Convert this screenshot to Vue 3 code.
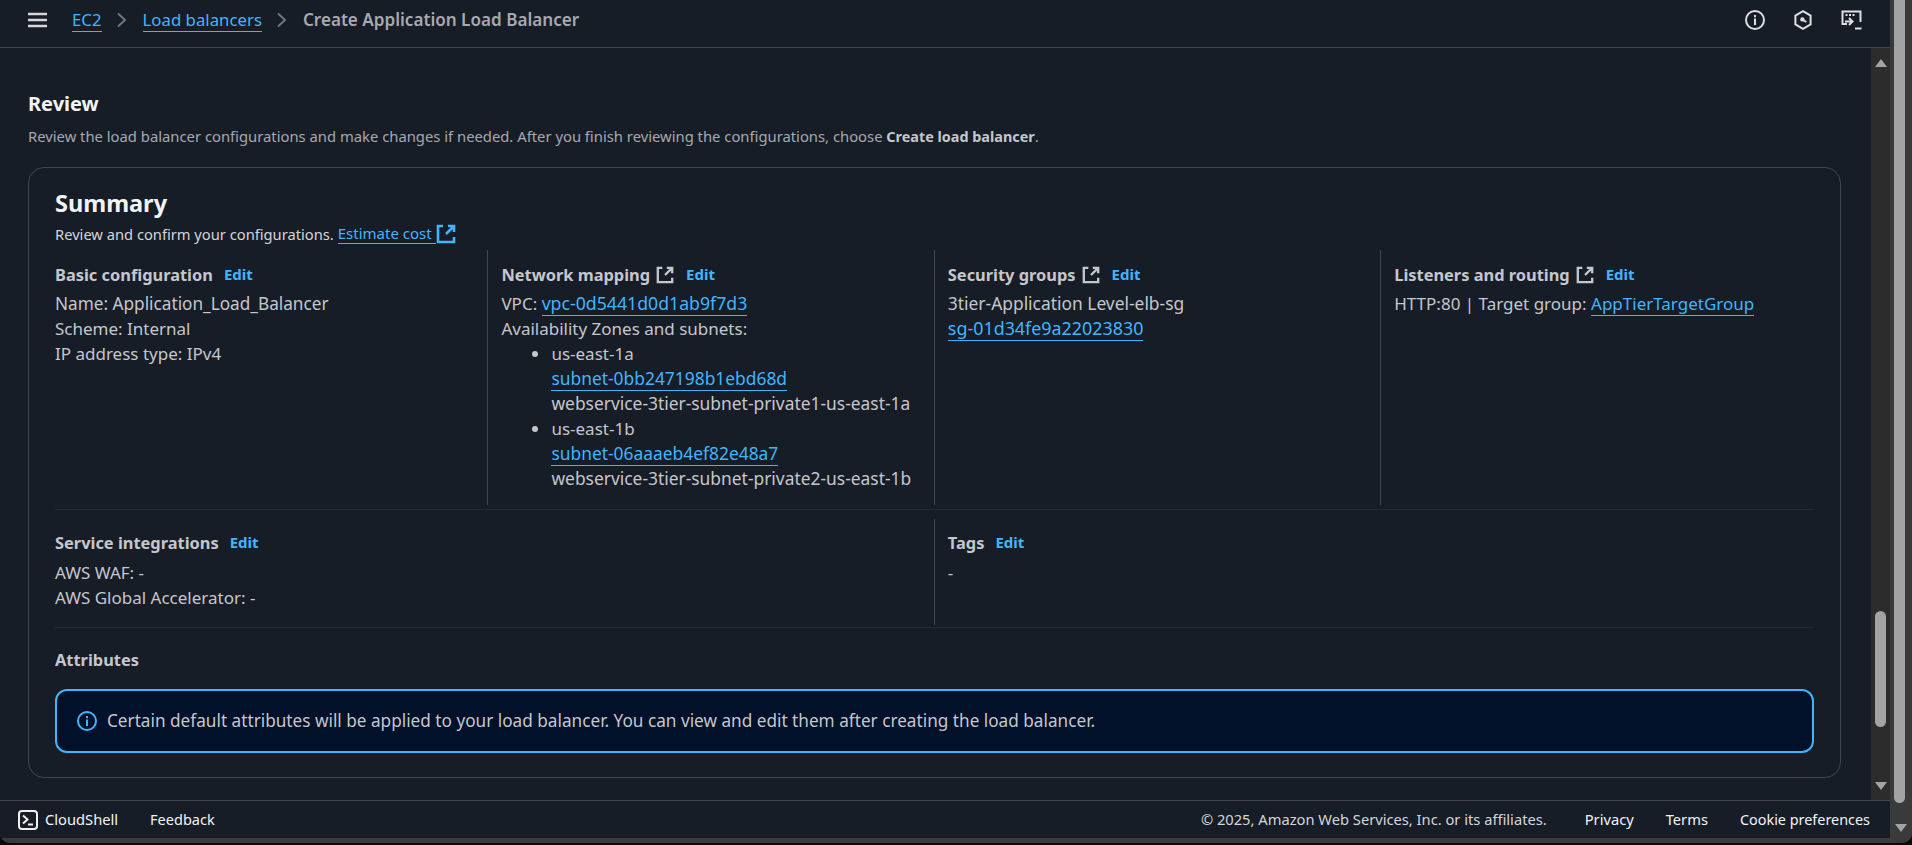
<script setup>
const subnets = [
  { az: 'us-east-1a', id: 'subnet-0bb247198b1ebd68d', name: 'webservice-3tier-subnet-private1-us-east-1a' },
  { az: 'us-east-1b', id: 'subnet-06aaaeb4ef82e48a7', name: 'webservice-3tier-subnet-private2-us-east-1b' }
]
</script>

<template>
  <div class="window">
    <div class="left">
      <header class="topbar">
        <svg class="menu" width="19" height="16" viewBox="0 0 19 16"><path d="M0 2h19M0 8h19M0 14h19" stroke="#d5d5da" stroke-width="2.4" fill="none"/></svg>
        <a class="link crumb">EC2</a>
        <svg class="chev" width="12" height="16" viewBox="0 0 12 16"><path d="M2 1.5 9 8l-7 6.5" stroke="#73757c" stroke-width="2" fill="none"/></svg>
        <a class="link crumb">Load balancers</a>
        <svg class="chev" width="12" height="16" viewBox="0 0 12 16"><path d="M2 1.5 9 8l-7 6.5" stroke="#73757c" stroke-width="2" fill="none"/></svg>
        <span class="crumb current">Create Application Load Balancer</span>
        <div class="top-icons">
          <svg width="20" height="20" viewBox="0 0 20 20" fill="none" stroke="#dedee3" stroke-width="2"><circle cx="10" cy="10" r="9"/><path d="M10 8.5V15M10 5v2.2"/></svg>
          <svg width="20" height="20" viewBox="0 0 20 20" fill="none" stroke="#dedee3" stroke-width="2"><path d="M10 1.2 17.6 5.6v8.8L10 18.800 2.400 14.400V5.600z"/><circle cx="9.400" cy="9.400" r="2.200" fill="#dedee3" stroke="none"/><path d="M10 10l3.400 2"/></svg>
          <svg width="21" height="20" viewBox="0 0 21 20" fill="none" stroke="#dedee3" stroke-width="2"><path d="M6 14H1.500V1.500h18V12"/><path d="M4.500 5h2M8 5h2M11.500 5h2" stroke-width="2"/><path d="M4 11.500h7.500M8 8l3.500 3.500L8 15M14 18.500h6.500"/></svg>
        </div>
      </header>

      <div class="middle">
        <main class="content">
          <h2 class="title">Review</h2>
          <p class="desc">Review the load balancer configurations and make changes if needed. After you finish reviewing the configurations, choose <b>Create load balancer</b>.</p>

          <section class="card">
            <h3 class="summary">Summary</h3>
            <p class="sub"><span>Review and confirm your configurations.</span> <a class="link est">Estimate cost</a>
              <svg class="ext" width="20" height="20" viewBox="0 0 20 20" fill="none" stroke="#42b4ff" stroke-width="2.600"><path d="M7 2H2v16h16v-5"/><path d="M12 2h6v6M18 2l-8 8" /></svg>
            </p>

            <div class="row four">
              <div class="col">
                <div class="head"><b>Basic configuration</b><a class="edit">Edit</a></div>
                <div class="name">Name: Application_Load_Balancer</div>
                <div>Scheme: Internal</div>
                <div>IP address type: IPv4</div>
              </div>
              <div class="col">
                <div class="head"><b>Network mapping</b>
                  <svg class="ext-head" width="18" height="18" viewBox="0 0 20 20" fill="none" stroke="#c6c6cd" stroke-width="2.600"><path d="M7 2H2v16h16v-5"/><path d="M12 2h6v6M18 2l-8 8"/></svg>
                  <a class="edit">Edit</a></div>
                <div>VPC: <a class="link vpc">vpc-0d5441d0d1ab9f7d3</a></div>
                <div>Availability Zones and subnets:</div>
                <ul class="zones">
                  <li v-for="s in subnets" :key="s.id">
                    <div>{{ s.az }}</div>
                    <div><a class="link num">{{ s.id }}</a></div>
                    <div class="num">{{ s.name }}</div>
                  </li>
                </ul>
              </div>
              <div class="col">
                <div class="head"><b>Security groups</b>
                  <svg class="ext-head" width="18" height="18" viewBox="0 0 20 20" fill="none" stroke="#c6c6cd" stroke-width="2.600"><path d="M7 2H2v16h16v-5"/><path d="M12 2h6v6M18 2l-8 8"/></svg>
                  <a class="edit">Edit</a></div>
                <div class="num">3tier-Application Level-elb-sg</div>
                <div><a class="link sg">sg-01d34fe9a22023830</a></div>
              </div>
              <div class="col">
                <div class="head"><b>Listeners and routing</b>
                  <svg class="ext-head" width="18" height="18" viewBox="0 0 20 20" fill="none" stroke="#c6c6cd" stroke-width="2.600"><path d="M7 2H2v16h16v-5"/><path d="M12 2h6v6M18 2l-8 8"/></svg>
                  <a class="edit">Edit</a></div>
                <div>HTTP:80 | Target group: <a class="link">AppTierTargetGroup</a></div>
              </div>
            </div>

            <div class="row two">
              <div class="col">
                <div class="head"><b>Service integrations</b><a class="edit">Edit</a></div>
                <div>AWS WAF: -</div>
                <div>AWS Global Accelerator: -</div>
              </div>
              <div class="col">
                <div class="head"><b>Tags</b><a class="edit">Edit</a></div>
                <div>-</div>
              </div>
            </div>

            <div class="attrs"><b>Attributes</b></div>
            <div class="alert">
              <svg width="20" height="20" viewBox="0 0 20 20" fill="none" stroke="#42b4ff" stroke-width="2"><circle cx="10" cy="10" r="9"/><path d="M10 8.500V15M10 5v2.200"/></svg>
              <span>Certain default attributes will be applied to your load balancer. You can view and edit them after creating the load balancer.</span>
            </div>
          </section>
        </main>
        <div class="scroll inner">
          <i class="arrow up"></i>
          <div class="track"><div class="thumb"></div></div>
          <i class="arrow down"></i>
        </div>
      </div>

      <footer class="footer">
        <svg width="20" height="20" viewBox="0 0 20 20" fill="none" stroke="#f0f0f3" stroke-width="2"><rect x="1" y="1" width="18" height="18" rx="3"/><path d="M5 5.500 9.500 9.500 5 13.500M10 14.500h5"/></svg>
        <span class="shell">CloudShell</span>
        <span class="fb">Feedback</span>
        <span class="copy">© 2025, Amazon Web Services, Inc. or its affiliates.</span>
        <span class="fl privacy">Privacy</span>
        <span class="fl terms">Terms</span>
        <span class="fl cookie">Cookie preferences</span>
      </footer>
      <div class="sliver"></div>
    </div>

    <div class="scroll outer">
      <div class="track"><div class="thumb"></div></div>
      <i class="arrow down"></i>
    </div>
  </div>
</template>

<style>
html, body { margin: 0; background: #0a0a0a; }
</style>

<style scoped>
.window { width: 1912px; height: 843px; display: flex; overflow: hidden; background: #3a3a3a; font-family: "Noto Sans", sans-serif; font-size: 17px; line-height: 25px; color: #c6c6cd; border-radius: 0 0 10px 10px; }
.left { width: 1890px; display: flex; flex-direction: column; }
.topbar { height: 48px; flex: none; display: flex; align-items: center; background: #161d26; border-bottom: 1px solid #424650; padding: 0 28px 7px 28px; box-sizing: border-box; }
.menu { margin-right: 25px; }
.crumb { font-size: 16.8px; line-height: 22px; }
.chev { margin: 0 14.500px; }
.current { font-size: 17.100px; color: #a8a8b0; font-weight: 600; }
.top-icons { margin-left: auto; display: flex; gap: 28px; align-items: center; }
.link { color: #42b4ff; text-decoration: none; border-bottom: 1px solid #42b4ff; }
.num { font-size: 17.400px; }
.vpc { font-size: 17.700px; }
.sg { font-size: 17.900px; }
.name { font-size: 17.200px; }
.middle { flex: 1; min-height: 0; display: flex; }
.content { flex: 1; min-width: 0; background: #161d26; padding: 42px 30px 0 28px; box-sizing: border-box; overflow: hidden; }
.title { margin: 0; font-size: 20px; line-height: 28px; font-weight: 700; color: #f3f3f7; }
.desc { margin: 8px 0 0; font-size: 14.800px; line-height: 20px; color: #a8a8b0; }
.desc b { color: #c6c6cd; font-weight: 700; font-size: 14.400px; }
.card { margin-top: 20px; height: 611px; box-sizing: border-box; border: 1px solid #424650; border-radius: 16px; padding: 20px 26px 0; background: #161d26; }
.summary { margin: 0; font-size: 23.500px; line-height: 30px; color: #f3f3f7; font-weight: 700; }
.sub { margin: 5px 0 0; font-size: 14.700px; line-height: 20px; display: flex; align-items: center; gap: 4px; color: #d5d5da; }
.est { padding-right: 4px; font-size: 15px; }
.ext { margin-left: -4px; }
.row { display: grid; column-gap: 26.670px; border-bottom: 1px solid #232a34; box-sizing: border-box; }
.four { grid-template-columns: repeat(4, 1fr); margin-top: 6px; height: 260px; }
.two { grid-template-columns: repeat(2, 1fr); height: 118px; }
.col { padding: 12px 0 0 13px; margin: 0 0 4px -14px; border-left: 1px solid #424650; white-space: nowrap; }
.two .col { padding-top: 11px; margin-top: 9px; margin-bottom: 2px; }
.col:first-child { padding-left: 0; margin-left: 0; border-left: 0; }
.head { display: flex; align-items: center; height: 25px; margin-bottom: 3.500px; }
.two .head { margin-bottom: 5px; }
.head b, .attrs b { font-weight: 700; font-size: 16.400px; color: #c6c6cd; }
.ext-head { margin-left: 6px; }
.edit { color: #42b4ff; font-size: 15px; font-weight: 700; margin-left: 11px; }
.ext-head + .edit { margin-left: 12px; }
.zones { margin: 0; padding: 0 0 0 50px; }
.attrs { margin-top: 19px; height: 25px; }
.alert { margin-top: 17px; height: 64px; box-sizing: border-box; display: flex; align-items: center; gap: 10px; padding: 0 20px 1px; border: 2px solid #42b4ff; border-radius: 12px; background: #001129; font-size: 17.200px; }
.scroll { display: flex; flex-direction: column; align-items: center; box-sizing: border-box; }
.inner { width: 19px; background: #2c2c2c; }
.outer { width: 22px; background: #3a3a3a; }
.track { flex: 1; width: 100%; display: flex; flex-direction: column; justify-content: flex-end; min-height: 0; box-sizing: border-box; }
.inner .track { padding-bottom: 55px; }
.inner .thumb { width: 11px; height: 116px; margin: 0 auto; border-radius: 6px; background: #a3a3a3; }
.outer .track { padding-bottom: 21px; }
.outer .thumb { width: 11px; flex: 1; margin: 0 4px; border-radius: 0 0 6px 6px; background: #a3a3a3; align-self: flex-start; }
.arrow { display: block; width: 0; height: 0; flex: none; border-left: 6px solid transparent; border-right: 6px solid transparent; }
.up { border-bottom: 8px solid #a3a3a3; margin-top: 11px; }
.down { border-top: 8px solid #a3a3a3; margin-bottom: 10px; }
.outer .down { margin-bottom: 11px; }
.footer { height: 38px; flex: none; display: flex; align-items: center; background: #161d26; border-top: 1px solid #424650; padding: 0 0 0 18px; box-sizing: border-box; font-size: 14.700px; color: #f3f3f7; }
.shell { margin-left: 7px; }
.fb { margin-left: 32px; font-size: 14.500px; }
.copy { margin-left: auto; color: #d5d5da; }
.fl { color: #f3f3f7; }
.privacy { margin-left: 38px; }
.terms { margin-left: 32px; }
.cookie { margin-left: 32px; margin-right: 20px; font-size: 14.400px; }
.sliver { height: 5px; flex: none; background: #3a3a3a; }
</style>
